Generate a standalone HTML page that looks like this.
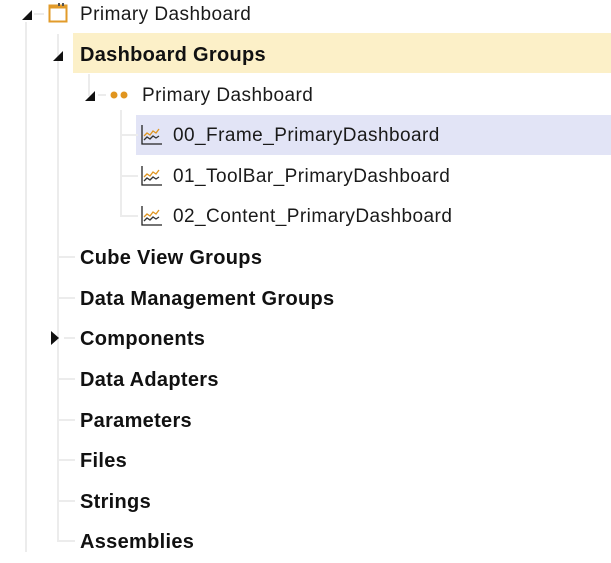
<!DOCTYPE html>
<html><head><style>
body{margin:0;width:611px;height:552px;background:#fff;position:relative;overflow:hidden;font-family:"Segoe UI","Liberation Sans",sans-serif;color:#1a1a1a}
.r{position:absolute;height:40px;line-height:42px;font-size:19px;white-space:nowrap;letter-spacing:0.45px}
.b{font-weight:bold;color:#111;font-size:20px;letter-spacing:0.3px}
.vl{position:absolute;width:2px;background:#ececec}
.hl{position:absolute;height:2px;background:#ececec}
</style></head><body>
<div class="vl" style="left:25px;top:22px;height:530px"></div>
<div class="vl" style="left:57px;top:34px;height:508px"></div>
<div class="vl" style="left:88px;top:74px;height:22px"></div>
<div class="vl" style="left:120px;top:110px;height:107px"></div>
<div style="position:absolute;left:73px;top:33px;width:538px;height:40px;background:#fcf0c8"></div>
<div style="position:absolute;left:136px;top:115px;width:475px;height:40px;background:#e2e4f6"></div>
<div class="hl" style="left:34px;top:13px;width:10px"></div>
<div class="hl" style="left:98px;top:94px;width:8px"></div>
<div class="hl" style="left:122px;top:134px;width:16px"></div>
<div class="hl" style="left:122px;top:175px;width:16px"></div>
<div class="hl" style="left:122px;top:215px;width:16px"></div>
<div class="hl" style="left:59px;top:256px;width:16px"></div>
<div class="hl" style="left:59px;top:297px;width:16px"></div>
<div class="hl" style="left:64px;top:337px;width:11px"></div>
<div class="hl" style="left:59px;top:378px;width:16px"></div>
<div class="hl" style="left:59px;top:419px;width:16px"></div>
<div class="hl" style="left:59px;top:459px;width:16px"></div>
<div class="hl" style="left:59px;top:500px;width:16px"></div>
<div class="hl" style="left:59px;top:540px;width:16px"></div>
<svg style="position:absolute;left:0;top:0" width="611" height="552">
<polygon points="22,20 32,20 32,10" fill="#111"/>
<polygon points="53,61 63,61 63,51" fill="#111"/>
<polygon points="85,101 95,101 95,91" fill="#111"/>
<polygon points="51,331 51,345 59,338" fill="#111"/>
<rect x="49.5" y="5.5" width="17" height="16" fill="none" stroke="#e29b2a" stroke-width="2"/>
<line x1="49" y1="7" x2="67" y2="7" stroke="#e29b2a" stroke-width="3"/>
<rect x="58" y="3" width="2" height="3" fill="#555"/><rect x="62" y="3" width="2" height="3" fill="#555"/>
<circle cx="114" cy="95" r="3.5" fill="#e0951f"/><circle cx="124" cy="95" r="3.5" fill="#e0951f"/>
<g id="c" fill="none" stroke-width="1.3">
<path d="M142 125 V144 H162" stroke="#222"/>
<path d="M144 136 l3-3 3 2 3-4 3 2 3-4" stroke="#e0951f"/>
<path d="M144 140 l3-3 3 2 3-3 3 2 3-2" stroke="#333"/>
</g>
<use href="#c" y="41"/><use href="#c" y="81"/>
</svg>
<div class="r" style="left:80px;top:-6px">Primary Dashboard</div>
<div class="r b" style="left:80px;top:34px">Dashboard Groups</div>
<div class="r" style="left:142px;top:75px">Primary Dashboard</div>
<div class="r" style="left:173px;top:115px">00_Frame_PrimaryDashboard</div>
<div class="r" style="left:173px;top:156px">01_ToolBar_PrimaryDashboard</div>
<div class="r" style="left:173px;top:196px">02_Content_PrimaryDashboard</div>
<div class="r b" style="left:80px;top:237px">Cube View Groups</div>
<div class="r b" style="left:80px;top:278px">Data Management Groups</div>
<div class="r b" style="left:80px;top:318px">Components</div>
<div class="r b" style="left:80px;top:359px">Data Adapters</div>
<div class="r b" style="left:80px;top:400px">Parameters</div>
<div class="r b" style="left:80px;top:440px">Files</div>
<div class="r b" style="left:80px;top:481px">Strings</div>
<div class="r b" style="left:80px;top:521px">Assemblies</div>
</body></html>
